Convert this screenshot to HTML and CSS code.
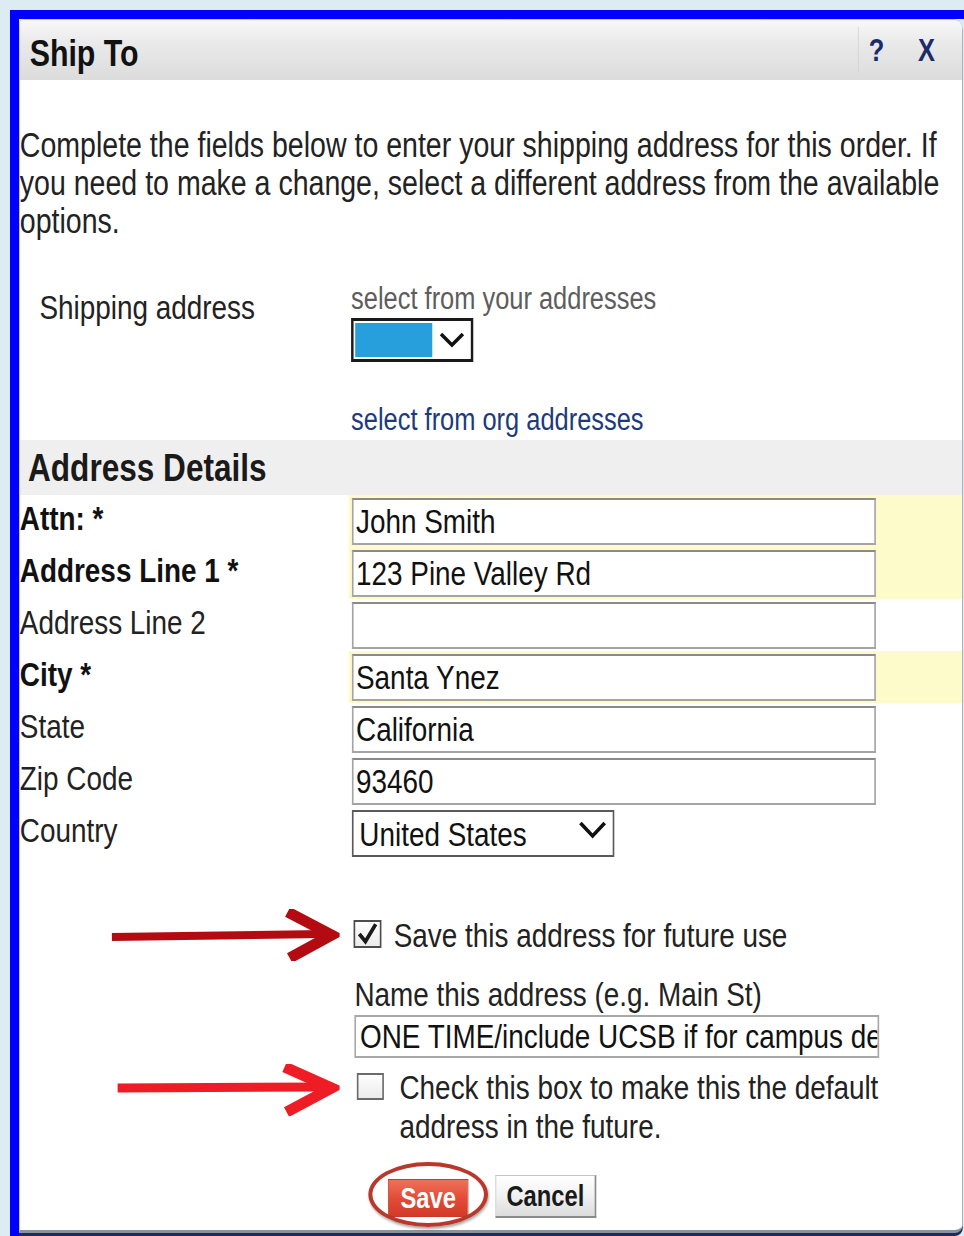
FILE: index.html
```html
<!DOCTYPE html>
<html lang="en">
<head>
<meta charset="utf-8">
<title>Ship To</title>
<link rel="stylesheet" href="styles.css">
</head>
<body>
<div class="frame">
  <div class="dialog">
    <div class="titlebar">
      <h1 class="title">Ship To</h1>
      <div class="tools">
        <span class="sep"></span>
        <a class="tool" href="#">?</a>
        <a class="tool" href="#">X</a>
      </div>
    </div>

    <p class="intro">Complete the fields below to enter your shipping address for this order. If you need to make a change, select a different address from the available options.</p>

    <div class="ship">
      <div class="ship-label">Shipping address</div>
      <div class="ship-pick">
        <div class="hint">select from your addresses</div>
        <div class="addr-select">
          <span class="addr-fill"></span>
          <svg class="chev" width="34" height="20" viewBox="0 0 28 20" preserveAspectRatio="none"><path d="M3 4 L14 15 L25 4" fill="none" stroke="#111" stroke-width="3.5"/></svg>
        </div>
        <a class="org-link" href="#">select from org addresses</a>
      </div>
    </div>

    <h2 class="section">Address Details</h2>

    <div class="fields">
      <div class="row req">
        <label class="lbl strong">Attn: *</label>
        <div class="cell"><input class="field" type="text" value="John Smith"></div>
      </div>
      <div class="row req">
        <label class="lbl strong">Address Line 1 *</label>
        <div class="cell"><input class="field" type="text" value="123 Pine Valley Rd"></div>
      </div>
      <div class="row">
        <label class="lbl">Address Line 2</label>
        <div class="cell"><input class="field" type="text" value=""></div>
      </div>
      <div class="row req">
        <label class="lbl strong">City *</label>
        <div class="cell"><input class="field" type="text" value="Santa Ynez"></div>
      </div>
      <div class="row">
        <label class="lbl">State</label>
        <div class="cell"><input class="field" type="text" value="California"></div>
      </div>
      <div class="row">
        <label class="lbl">Zip Code</label>
        <div class="cell"><input class="field" type="text" value="93460"></div>
      </div>
      <div class="row">
        <label class="lbl">Country</label>
        <div class="cell">
          <div class="country">
            <span>United States</span>
            <svg width="37" height="20" viewBox="0 0 30 20" preserveAspectRatio="none"><path d="M3 3 L15 16 L27 3" fill="none" stroke="#111" stroke-width="3.5"/></svg>
          </div>
        </div>
      </div>
    </div>

    <div class="extras">
      <div class="arrow-cell a1">
        <svg width="278" height="52" viewBox="0 0 228 52" preserveAspectRatio="none">
          <path d="M0 28 L212 25" stroke="#b30b11" stroke-width="8" fill="none"/>
          <path d="M176 3 L220 26 L178 49" stroke="#b30b11" stroke-width="11" fill="none" stroke-linejoin="miter"/>
        </svg>
      </div>
      <div class="check-line first">
        <span class="box checked">
          <svg width="31" height="26" viewBox="0 0 24 24" preserveAspectRatio="none"><path d="M4 12 L10 19 L20 3" fill="none" stroke="#1a1a1a" stroke-width="3.6"/></svg>
        </span>
        <span class="check-text">Save this address for future use</span>
      </div>

      <div class="name-block">
        <div class="name-label">Name this address (e.g. Main St)</div>
        <input class="name-field" type="text" value="ONE TIME/include UCSB if for campus delivery">
      </div>

      <div class="arrow-cell a2">
        <svg width="271" height="52" viewBox="0 0 222 52" preserveAspectRatio="none">
          <path d="M0 24 L208 23" stroke="#ee1c25" stroke-width="9" fill="none"/>
          <path d="M167 3 L214 24 L169 48" stroke="#ee1c25" stroke-width="11" fill="none" stroke-linejoin="miter"/>
        </svg>
      </div>
      <div class="check-line second">
        <span class="box"></span>
        <span class="check-text">Check this box to make this the default address in the future.</span>
      </div>

      <div class="actions">
        <span class="save-wrap">
          <button class="btn btn-save" type="button">Save</button>
          <span class="ring"></span>
        </span>
        <button class="btn btn-cancel" type="button">Cancel</button>
      </div>
    </div>
  </div>
</div>
</body>
</html>
```

FILE: styles.css
```css
html, body {
  margin: 0;
  padding: 0;
}

body {
  background: #dcecf2;
  font-family: "Liberation Sans", Arial, sans-serif;
  color: #222;
  height: 1236px;
  overflow: hidden;
}

/* blue outer window frame */
.frame {
  margin: 10px 0 0 10px;
  border-left: 9px solid #0000ff;
  border-top: 9px solid #0000ff;
  height: 1217px;
}

/* The dialog uses a condensed rendering: it is laid out wide and
   narrowed horizontally, so all horizontal sizes below are in the
   unscaled (wide) units. */
.dialog {
  width: 1151px;
  height: 1214px;
  box-sizing: border-box;
  background: #fff;
  border: 1px solid #c9c9c9;
  border-bottom: 3px solid #8c929b;
  border-radius: 6px 11px 10px 0 / 5px 9px 8px 0;
  box-shadow: 0 3px 0 #1d2a5e;
  display: flex;
  flex-direction: column;
  transform: scaleX(0.82);
  transform-origin: 0 0;
}

/* title bar */
.titlebar {
  height: 60px;
  flex: 0 0 60px;
  display: flex;
  align-items: center;
  justify-content: space-between;
  padding: 0 33px 0 12px;
  background: linear-gradient(#f8f8f8, #e9e9e9 40%, #dcdcdc);
  border-radius: 5px 10px 0 0 / 4px 8px 0 0;
}

.title {
  margin: 0;
  padding-top: 7px;
  font-size: 37px;
  font-weight: bold;
  color: #111;
}

.tools {
  display: flex;
  align-items: center;
  height: 100%;
}

.sep {
  width: 1px;
  height: 46px;
  background: #d2d2d2;
  margin-right: 12px;
}

.tool {
  font-size: 31px;
  font-weight: bold;
  color: #1b2a6b;
  text-decoration: none;
  padding-top: 2px;
}

.tool + .tool {
  margin-left: 41px;
}

/* intro text */
.intro {
  margin: 46px 0 0;
  width: 1140px;
  font-size: 34.8px;
  line-height: 38px;
  color: #222;
}

/* shipping address picker */
.ship {
  display: grid;
  grid-template-columns: 404px 1fr;
  margin-top: 42px;
}

.ship-label {
  padding: 6px 0 0 24px;
  font-size: 34px;
  line-height: 38px;
  color: #222;
}

.hint {
  font-size: 31px;
  line-height: 34px;
  color: #5d5d5d;
}

.addr-select {
  margin-top: 2px;
  width: 149px;
  height: 44px;
  box-sizing: border-box;
  border: 3px solid #1a1a1a;
  border-left-width: 3.6px;
  border-right-width: 3.6px;
  padding: 2px;
  display: flex;
  align-items: center;
  background: #fff;
}

.addr-fill {
  flex: 0 0 94px;
  align-self: stretch;
  background: #279fdc;
}

.chev {
  margin-left: 7px;
}

.org-link {
  display: block;
  margin-top: 41px;
  font-size: 31px;
  line-height: 34px;
  color: #1c3a7d;
  text-decoration: none;
}

/* section band */
.section {
  margin: 3px 0 0;
  height: 55px;
  flex: 0 0 55px;
  padding-left: 10px;
  background: #efefef;
  font-size: 38.5px;
  line-height: 55px;
  font-weight: bold;
  color: #1a1a1a;
}

/* address fields */
.row {
  display: grid;
  grid-template-columns: 401px 1fr;
  height: 52px;
}

.lbl {
  padding-top: 4px;
  font-size: 34px;
  line-height: 38px;
  color: #222;
}

.lbl.strong {
  font-weight: bold;
  color: #111;
}

.cell {
  padding: 3px 0 0 4px;
}

.row.req .cell {
  background: #fdfbc9;
}

.field,
.name-field {
  display: block;
  box-sizing: border-box;
  width: 639px;
  height: 47px;
  margin: 0;
  padding: 0 0 0 3px;
  border: 2px solid #a4a4a4;
  border-left-width: 2.4px;
  border-right-width: 2.4px;
  border-top-color: #8a8a8a;
  background: #fff;
  font-family: inherit;
  font-size: 34px;
  color: #111;
  outline: none;
}

.country {
  box-sizing: border-box;
  width: 320px;
  height: 47px;
  border: 2px solid #5a5a5a;
  border-left-width: 2.4px;
  border-right-width: 2.4px;
  display: flex;
  align-items: center;
  justify-content: space-between;
  padding: 2px 6px 0 7px;
  font-size: 34px;
  color: #111;
}

.country svg {
  margin-top: -10px;
}

/* save options */
.extras {
  display: grid;
  grid-template-columns: 401px 1fr;
  margin-top: 56px;
}

.arrow-cell {
  display: flex;
  justify-content: flex-end;
  padding-right: 11px;
}

.arrow-cell.a1 {
  margin-top: -6px;
}

.arrow-cell.a2 {
  margin-top: 6px;
}

.check-line {
  display: flex;
  align-items: flex-start;
  font-size: 34px;
  color: #222;
}

.check-line.first {
  height: 40px;
  line-height: 40px;
  padding-left: 6px;
}

.check-line.second {
  margin-top: 10px;
  line-height: 39px;
  padding-left: 10px;
}

.box {
  flex: 0 0 auto;
  box-sizing: border-box;
  width: 34px;
  height: 28px;
  border: 2px solid #4c4c4c;
  border-left-width: 2.4px;
  border-right-width: 2.4px;
  background: linear-gradient(#fdfdfd, #ececec);
  display: flex;
  align-items: center;
  justify-content: center;
}

.check-line.first .box {
  margin-top: 5px;
  margin-right: 15px;
}

.check-line.second .box {
  width: 33px;
  height: 27px;
  border-color: #6a6a6a;
  margin-top: 5px;
  margin-right: 19px;
}

.check-line.second .check-text {
  width: 610px;
}

.name-block {
  grid-column: 2;
  margin-top: 14px;
  padding-left: 7px;
}

.name-label {
  font-size: 34px;
  line-height: 38px;
  color: #222;
}

.name-field {
  margin-top: 2px;
  width: 640px;
  height: 43px;
  padding-left: 5px;
  border-color: #a8a8a8;
}

/* buttons */
.actions {
  grid-column: 2;
  display: flex;
  align-items: flex-end;
  margin-top: 29px;
  padding-left: 48px;
}

.save-wrap {
  position: relative;
  display: inline-block;
  margin-bottom: 1px;
}

.btn {
  font-family: inherit;
  font-weight: bold;
  font-size: 29px;
  cursor: pointer;
}

.btn-save {
  display: block;
  width: 98px;
  height: 38px;
  padding: 0;
  border: 1px solid #c23a2a;
  background: linear-gradient(#f0705a, #e04a36 55%, #d43a28);
  color: #fff;
}

/* annotation ring drawn around the save button */
.ring {
  position: absolute;
  left: -24px;
  top: -17px;
  width: 146px;
  height: 65px;
  box-sizing: border-box;
  border: 4px solid #b8392b;
  border-left-width: 5px;
  border-right-width: 5px;
  border-radius: 50%;
  box-shadow: 1px 2px 3px rgba(0, 0, 0, 0.35);
}

.btn-cancel {
  margin-left: 33px;
  width: 123px;
  height: 43px;
  padding: 0;
  border: 1px solid #c4c4c4;
  border-right: 2px solid #8a8a8a;
  border-bottom: 2px solid #8a8a8a;
  background: linear-gradient(#ffffff, #f1f1f1 50%, #dcdcdc);
  color: #1a1a1a;
}
```
